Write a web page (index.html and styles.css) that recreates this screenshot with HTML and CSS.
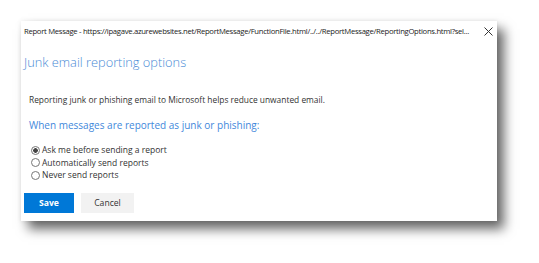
FILE: index.html
```html
<!DOCTYPE html>
<html lang="en">
<head>
    <meta charset="UTF-8">
    <title>Report Message</title>
    <link rel="stylesheet" href="styles.css">
</head>
<body>
    <div class="page">
        <div class="dialog">
            <div class="titlebar">
                <span class="title">Report Message - https://ipagave.azurewebsites.net/ReportMessage/FunctionFile.html/../../ReportMessage/ReportingOptions.html?sel...</span>
                <svg class="close" width="9" height="9" viewBox="0 0 9 9">
                    <path d="M0.5 0.5 L8.5 8.5 M8.5 0.5 L0.5 8.5" stroke="#333" stroke-width="1" fill="none"/>
                </svg>
            </div>

            <div class="content">
                <h1>Junk email reporting options</h1>
                <p class="intro">Reporting junk or phishing email to Microsoft helps reduce unwanted email.</p>
                <h2>When messages are reported as junk or phishing:</h2>

                <div class="options">
                    <label class="option"><input type="radio" name="mode" checked> Ask me before sending a report</label>
                    <label class="option"><input type="radio" name="mode"> Automatically send reports</label>
                    <label class="option"><input type="radio" name="mode"> Never send reports</label>
                </div>

                <div class="buttons">
                    <button class="btn primary">Save</button>
                    <button class="btn">Cancel</button>
                </div>
            </div>
        </div>
    </div>
</body>
</html>
```

FILE: styles.css
```css
body {
    margin: 0;
    background: #fff;
    font-family: "Open Sans", "Noto Sans", sans-serif;
    color: #333;
}

.page {
    padding: 21px 0 30px 21px;
}

.dialog {
    width: 476px;
    height: 200px;
    background: #fff;
    box-shadow: 7px 8px 11px rgba(0, 0, 0, 0.6), 0 0 5px rgba(0, 0, 0, 0.08);
}

.titlebar {
    height: 20px;
    display: flex;
    align-items: center;
    justify-content: space-between;
    padding: 0 4px 0 3px;
}

.title {
    font-size: 7.7px;
    letter-spacing: -0.3px;
    color: #222;
    white-space: nowrap;
}

.close {
    flex: none;
    margin-left: 4px;
}

.content {
    padding: 0 0 0 3px;
}

h1 {
    margin: 12px 0 0 0;
    font-size: 12.8px;
    font-weight: 300;
    color: #4a8bd6;
    line-height: 18px;
}

.intro {
    margin: 23px 0 0 5px;
    font-size: 8.4px;
    line-height: 12px;
}

h2 {
    margin: 12px 0 0 5px;
    font-size: 10px;
    font-weight: 400;
    color: #3f88db;
    line-height: 14px;
}

.options {
    margin: 12px 0 0 5px;
    display: flex;
    flex-direction: column;
}

.option {
    display: flex;
    align-items: center;
    font-size: 8.5px;
    line-height: 12.5px;
    height: 12.5px;
}

.option input {
    appearance: none;
    margin: 0 2px 0 2px;
    width: 9px;
    height: 9px;
    border: 1px solid #777;
    border-radius: 50%;
    background: #fff;
}

.option input:checked {
    background: radial-gradient(circle, #444 0, #444 2px, #fff 2.6px);
}

.buttons {
    display: flex;
    gap: 7px;
    margin-top: 11px;
}

.btn {
    width: 53px;
    height: 20px;
    border: none;
    background: #f2f2f2;
    color: #333;
    font-family: inherit;
    font-size: 8.6px;
    padding: 0;
}

.btn.primary {
    width: 50px;
    background: #0078d7;
    color: #fff;
    font-weight: 700;
}
```
